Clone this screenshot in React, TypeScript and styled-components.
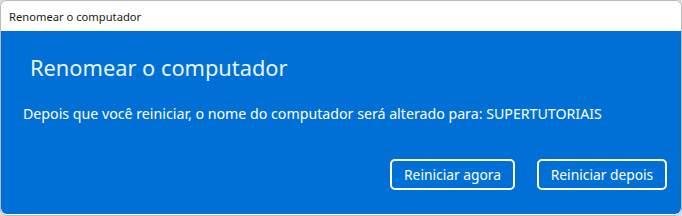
import React from 'react'
import styled, { createGlobalStyle } from 'styled-components'

const GlobalStyle = createGlobalStyle`
  html, body {
    margin: 0;
    padding: 0;
    background: #dcdcdc;
  }
  body {
    font-family: 'Segoe UI', 'Noto Sans', 'Liberation Sans', sans-serif;
  }
`

const Window = styled.div`
  width: 682px;
  height: 216px;
  box-sizing: border-box;
  border: 1px solid #b9b9b9;
  border-radius: 7px;
  overflow: hidden;
  display: flex;
  flex-direction: column;
  background: #ffffff;
`

const TitleBar = styled.div`
  height: 30px;
  flex: none;
  display: flex;
  align-items: center;
  padding-left: 8px;
  font-size: 11.2px;
  color: #1a1a1a;
  background: #ffffff;
`

const Body = styled.div`
  flex: 1;
  background: #0070d6;
  color: #ffffff;
  display: flex;
  flex-direction: column;
  padding: 22px 14px 24px 29px;
  margin-bottom: 1px;
  border-radius: 0 0 6px 6px;
`

const Heading = styled.h1`
  margin: 0;
  font-weight: 400;
  font-size: 21.8px;
  line-height: 30px;
  color: #e8f4ff;
`

const Message = styled.p`
  margin: 21px 0 0 -7px;
  font-size: 14.2px;
  line-height: 20px;
`

const Actions = styled.div`
  margin-top: auto;
  display: flex;
  justify-content: flex-end;
  gap: 22px;
`

const Button = styled.button<{ $w: number }>`
  width: ${(p) => p.$w}px;
  height: 31px;
  box-sizing: border-box;
  border: 2px solid #ffffff;
  border-radius: 5px;
  background: transparent;
  color: #ffffff;
  font-family: inherit;
  font-size: 13.8px;
  padding: 0;
`

export default function App() {
  return (
    <>
      <GlobalStyle />
      <Window>
        <TitleBar>Renomear o computador</TitleBar>
        <Body>
          <Heading>Renomear o computador</Heading>
          <Message>
            Depois que você reiniciar, o nome do computador será alterado para: SUPERTUTORIAIS
          </Message>
          <Actions>
            <Button $w={125}>Reiniciar agora</Button>
            <Button $w={130}>Reiniciar depois</Button>
          </Actions>
        </Body>
      </Window>
    </>
  )
}
